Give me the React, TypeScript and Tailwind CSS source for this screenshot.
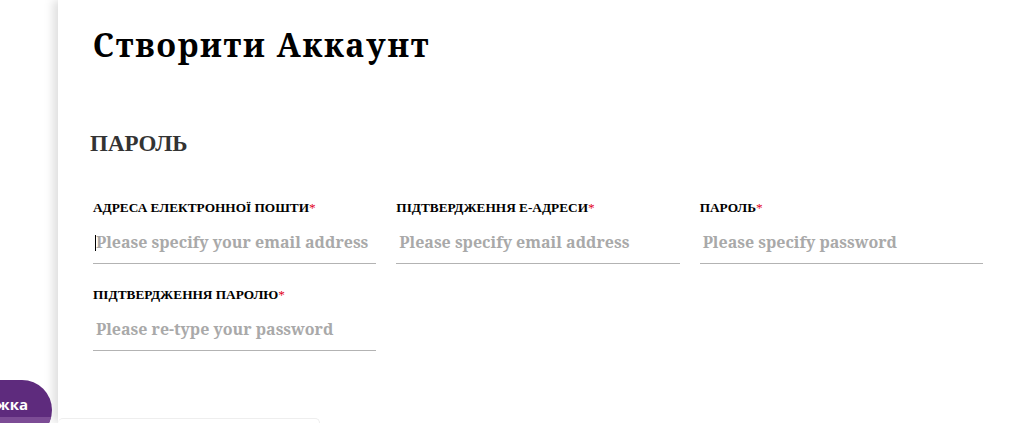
import React from "react";

const times = { fontFamily: '"Liberation Serif", "Times New Roman", serif' };
const georgia = { fontFamily: '"Noto Serif", Georgia, serif' };

function Field({ label, placeholder, cursor }: { label: string; placeholder: string; cursor?: boolean }) {
  return (
    <div className="flex flex-col">
      <label className="block text-[13.3px] font-bold uppercase text-black leading-[16px] h-[16px] whitespace-nowrap" style={times}>
        {label}
        <span className="text-[#e2001a] font-normal">*</span>
      </label>
      <div className="relative h-[48px] border-b border-[#b3b3b3] pt-[15px] pl-[3px]">
        {cursor && <span className="absolute left-[2px] top-[19px] w-[1px] h-[16px] bg-black" />}
        <div className="text-[16px] font-bold text-[#a9a9a9] leading-[22px] whitespace-nowrap" style={georgia}>
          {placeholder}
        </div>
      </div>
    </div>
  );
}

export default function App() {
  return (
    <div className="relative w-[1012px] h-[423px] overflow-hidden bg-white">
      <div className="absolute left-[58px] top-0 w-[954px] h-[423px] bg-white shadow-[-5px_0_9px_rgba(0,0,0,0.13)]">
        <div className="absolute left-0 top-[418px] w-[262px] h-[10px] rounded-t-[5px] border-t border-r border-[#eeeeee]" />
        <div className="relative pl-[35px] pr-[29px]">
          <h1 className="pt-[25px] text-[32px] font-bold leading-[40px] text-black tracking-[0.055em] whitespace-nowrap" style={georgia}>
            Створити Аккаунт
          </h1>
          <h2 className="mt-[67px] -ml-[3px] text-[23px] font-bold leading-[24px] text-[#333333]" style={times}>
            ПАРОЛЬ
          </h2>
          <div className="mt-[44px] grid grid-cols-3 gap-x-[20px] gap-y-[23px]">
            <Field label="Адреса електронної пошти" placeholder="Please specify your email address" cursor />
            <Field label="Підтвердження е-адреси" placeholder="Please specify email address" />
            <Field label="Пароль" placeholder="Please specify password" />
            <Field label="Підтвердження паролю" placeholder="Please re-type your password" />
          </div>
        </div>
      </div>
      <div className="absolute left-[-60px] top-[380px] w-[112px] h-[60px] rounded-[30px] bg-[#5e2b7d] overflow-hidden flex items-start justify-end pt-[14px] pr-[24px]">
        <span className="text-white text-[15px] font-bold leading-[20px] whitespace-nowrap" style={{ fontFamily: '"Open Sans", sans-serif' }}>
          Поддержка
        </span>
        <div className="absolute left-0 top-[37px] w-full h-[10px] bg-[#7c4c95]" />
      </div>
    </div>
  );
}
